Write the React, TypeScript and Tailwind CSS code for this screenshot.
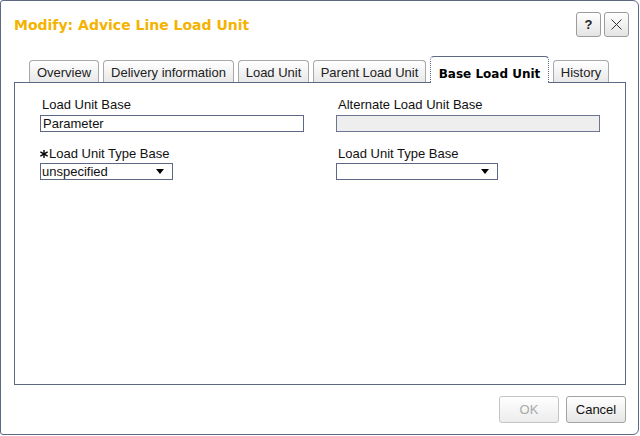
import React from 'react'

const tabs = [
  { label: 'Overview', w: 'w-[70px]' },
  { label: 'Delivery information', w: 'w-[131px]' },
  { label: 'Load Unit', w: 'w-[71px]' },
  { label: 'Parent Load Unit', w: 'w-[113px]' },
  { label: 'Base Load Unit', w: 'w-[119px]', active: true },
  { label: 'History', w: 'w-[56px]' },
]

function Arrow() {
  return (
    <svg width="8" height="5" viewBox="0 0 8 5" className="block">
      <polygon points="0,0 8,0 4,5" fill="#000" />
    </svg>
  )
}

function Star() {
  return (
    <svg width="8" height="8" viewBox="0 0 8 8" className="block">
      <g stroke="#000" strokeWidth="1.4" strokeLinecap="round">
        <line x1="4" y1="0.5" x2="4" y2="7.5" />
        <line x1="0.8" y1="2.2" x2="7.2" y2="5.8" />
        <line x1="0.8" y1="5.8" x2="7.2" y2="2.2" />
      </g>
    </svg>
  )
}

export default function App() {
  return (
    <div className="w-[640px] h-[436px] bg-white font-['Liberation_Sans',Arial,sans-serif] text-[13px] leading-[15px] text-[#111]">
      <div className="w-[639px] h-[435px] border border-[#5c6884] rounded-[3px] rounded-r-[6px] flex flex-col">
        {/* header */}
        <div className="h-[55px] flex items-start justify-between">
          <div className="pl-[13px] pt-[16px] font-['DejaVu_Sans',sans-serif] font-bold text-[14px] leading-[17px] text-[#f4b300]">
            Modify: Advice Line Load Unit
          </div>
          <div className="flex gap-[3px] pt-[11px] pr-[9px]">
            <button className="w-[25px] h-[25px] rounded-[3px] border border-[#9c9c9c] bg-gradient-to-b from-white to-[#e4e4e4] flex items-center justify-center font-bold text-[13px] text-[#222]">
              ?
            </button>
            <button className="w-[25px] h-[25px] rounded-[3px] border border-[#9c9c9c] bg-gradient-to-b from-white to-[#e4e4e4] flex items-center justify-center">
              <svg width="11" height="11" viewBox="0 0 11 11">
                <path d="M0.5 0.5 L10.5 10.5 M10.5 0.5 L0.5 10.5" stroke="#333" strokeWidth="1" />
              </svg>
            </button>
          </div>
        </div>

        {/* tabs */}
        <div className="h-[26px] flex items-end gap-[4px] ml-[28px] relative z-10">
          {tabs.map((t) =>
            t.active ? (
              <div
                key={t.label}
                className={`${t.w} h-[27px] -mb-px bg-white border-t border-x border-[#5c6884] border-dotted rounded-t-[4px] flex justify-center pt-[10px] font-['DejaVu_Sans',sans-serif] font-bold text-[12px] leading-[14px] text-black`}
                style={{ borderTopStyle: 'solid' }}
              >
                {t.label}
              </div>
            ) : (
              <div
                key={t.label}
                className={`${t.w} h-[22px] border border-b-0 border-[#a8a8a8] rounded-t-[4px] bg-gradient-to-b from-white to-[#e8e8e8] flex justify-center pt-[4px] text-[#222]`}
              >
                {t.label}
              </div>
            )
          )}
        </div>

        {/* panel */}
        <div className="ml-[13px] w-[612px] h-[303px] border border-[#5c6884] pt-[14px] pl-[25px]">
          <div className="grid grid-cols-[264px_264px] gap-x-[32px]">
            <div>
              <div className="pl-[2px] h-[15px]">Load Unit Base</div>
              <div className="mt-[3px] h-[17px] border border-[#5c6884] pl-[2px] leading-[15px] bg-white">
                Parameter
              </div>
              <div className="mt-[14px] h-[15px] flex items-center gap-[1px]">
                <Star />
                <span>Load Unit Type Base</span>
              </div>
              <div className="mt-[2px] w-[133px] h-[17px] border border-[#5c6884] pl-[1px] flex items-center justify-between pr-[8px] leading-[15px]">
                <span>unspecified</span>
                <Arrow />
              </div>
            </div>
            <div>
              <div className="pl-[2px] h-[15px]">Alternate Load Unit Base</div>
              <div className="mt-[3px] h-[17px] border border-[#6c7690] bg-[#eeeeee]" />
              <div className="mt-[14px] h-[15px] pl-[2px]">Load Unit Type Base</div>
              <div className="mt-[2px] w-[162px] h-[17px] border border-[#5c6884] flex items-center justify-end pr-[8px]">
                <Arrow />
              </div>
            </div>
          </div>
        </div>

        {/* footer */}
        <div className="flex justify-end gap-[7px] pr-[12px] pt-[11px]">
          <button className="w-[60px] h-[27px] rounded-[3px] border border-[#c4c4c4] bg-gradient-to-b from-white to-[#ececec] text-[#a9a9a9]">
            OK
          </button>
          <button className="w-[60px] h-[27px] rounded-[3px] border border-[#a4a4a4] bg-gradient-to-b from-white to-[#e6e6e6] text-[#111]">
            Cancel
          </button>
        </div>
      </div>
    </div>
  )
}
